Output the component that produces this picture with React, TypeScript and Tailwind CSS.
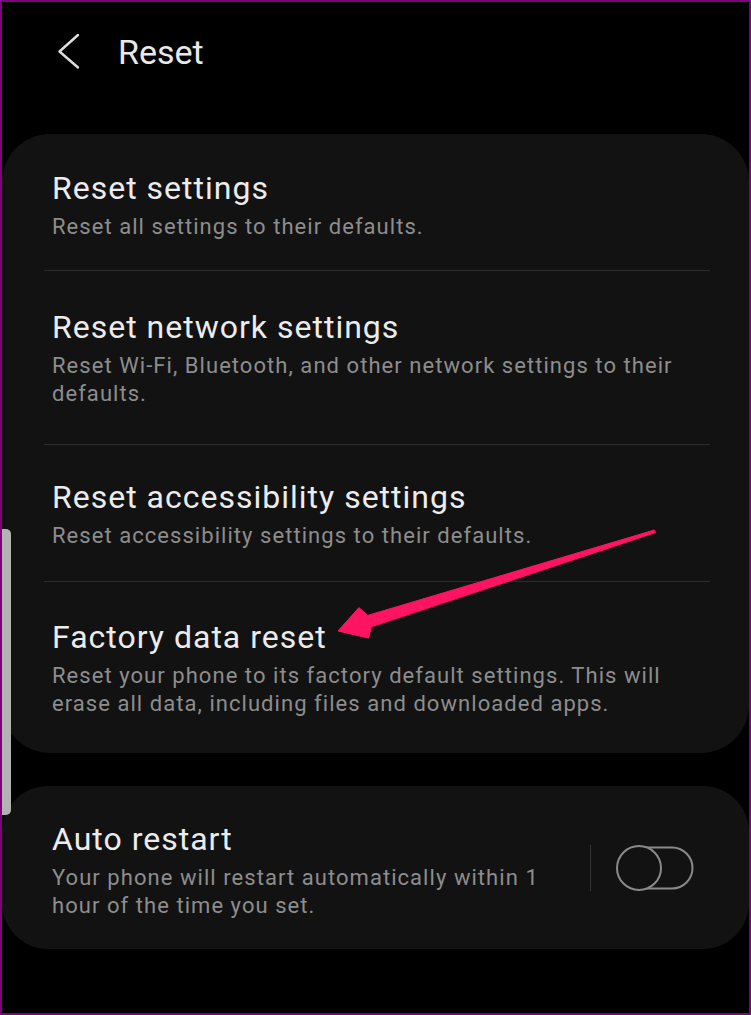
import React from "react";

type Row = {
  title: string;
  sub: string;
  pad: string;
  border: boolean;
};

const rows: Row[] = [
  {
    title: "Reset settings",
    sub: "Reset all settings to their defaults.",
    pad: "pt-[36px] pb-[29px]",
    border: false,
  },
  {
    title: "Reset network settings",
    sub: "Reset Wi-Fi, Bluetooth, and other network settings to their defaults.",
    pad: "pt-[38px] pb-[36px]",
    border: true,
  },
  {
    title: "Reset accessibility settings",
    sub: "Reset accessibility settings to their defaults.",
    pad: "pt-[34px] pb-[31px]",
    border: true,
  },
  {
    title: "Factory data reset",
    sub: "Reset your phone to its factory default settings. This will erase all data, including files and downloaded apps.",
    pad: "pt-[37px] pb-[35px]",
    border: true,
  },
];

function Title({ children }: { children: React.ReactNode }) {
  return (
    <div className="text-[32px] leading-[36px] tracking-[1px] text-[#ececec]">
      {children}
    </div>
  );
}

function Sub({ children }: { children: React.ReactNode }) {
  return (
    <div className="mt-[7px] text-[22px] leading-[28px] tracking-[1.05px] text-[#8d8d8d]">
      {children}
    </div>
  );
}

export default function App() {
  return (
    <div className="relative w-[751px] h-[1015px] overflow-hidden bg-black border-2 border-[#800080] font-['Roboto','Noto_Sans',sans-serif]">
      {/* header */}
      <div className="h-[132px] flex items-start pt-[30px] pl-[53px]">
        <svg width="30" height="40" viewBox="0 0 30 40" className="mt-[1px]">
          <path
            d="M23 2 L4.5 18.5 L23 34.5"
            fill="none"
            stroke="#dedede"
            strokeWidth="2.4"
            strokeLinecap="round"
            strokeLinejoin="round"
          />
        </svg>
        <div className="ml-[33px] text-[34px] leading-[40px] text-[#e9e9e9]">Reset</div>
      </div>

      {/* card 1 */}
      <div className="bg-[#121212] rounded-[48px] pl-[42px] pr-[39px]">
        {rows.map((r) => (
          <div
            key={r.title}
            className={`${r.pad} pl-[8px] pr-[2px] ${r.border ? "border-t border-[#2c2c2c]" : ""}`}
          >
            <Title>{r.title}</Title>
            <Sub>{r.sub}</Sub>
          </div>
        ))}
      </div>

      {/* card 2 */}
      <div className="mt-[33px] bg-[#121212] rounded-[46px] flex items-center pl-[50px] pr-[54px]">
        <div className="flex-1 pt-[35px] pb-[29px] pr-[12px]">
          <Title>Auto restart</Title>
          <Sub>Your phone will restart automatically within 1 hour of the time you set.</Sub>
        </div>
        <div className="w-px h-[46px] bg-[#353535]" />
        <svg width="80" height="48" viewBox="0 0 80 48" className="ml-[24px]">
          <rect x="5" y="3.5" width="72.5" height="41" rx="20.5" fill="none" stroke="#8a8a8a" strokeWidth="2" />
          <circle cx="24" cy="24" r="22" fill="#121212" stroke="#8a8a8a" strokeWidth="2" />
        </svg>
      </div>

      {/* scroll indicator */}
      <div className="absolute left-0 top-[527px] w-[9px] h-[286px] bg-[#b3b3b3] rounded-r-[5px]" />

      {/* annotation arrow */}
      <svg
        width="751"
        height="1015"
        viewBox="0 0 751 1015"
        className="absolute left-[-2px] top-[-2px] pointer-events-none"
      >
        <polygon
          points="338,631 358.9,607.6 367.7,615.4 654.3,530 655.5,532.5 371.3,626.8 368.6,638.1"
          fill="#ff1464"
          stroke="#ff1464"
          strokeWidth="1"
          strokeLinejoin="round"
        />
      </svg>
    </div>
  );
}
